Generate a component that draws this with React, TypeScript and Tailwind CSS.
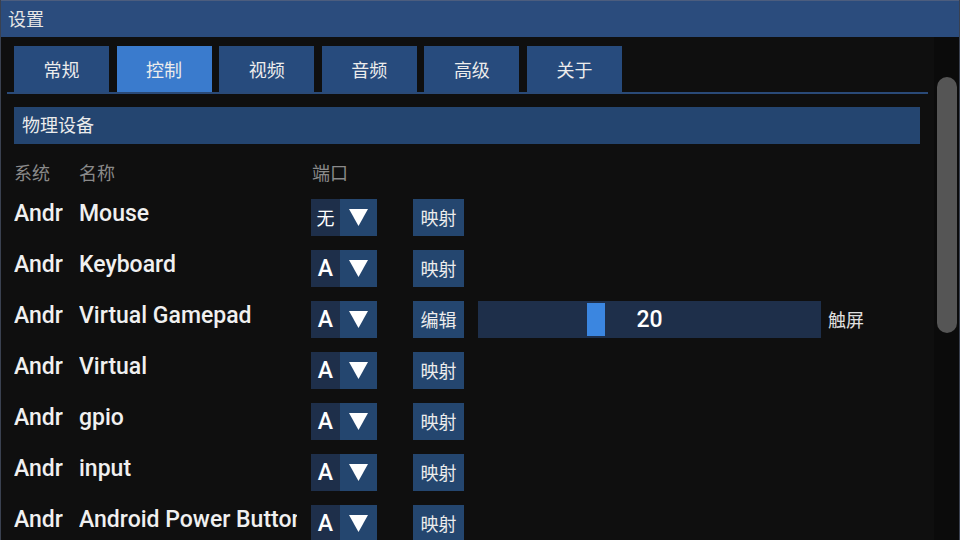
import { useState } from "react";

const tabs = ["常规", "控制", "视频", "音频", "高级", "关于"];

type Device = {
  system: string;
  name: string;
  port: string;
  action: string;
  touch?: number;
};

const devices: Device[] = [
  { system: "Android", name: "Mouse", port: "无", action: "映射" },
  { system: "Android", name: "Keyboard", port: "A", action: "映射" },
  { system: "Android", name: "Virtual Gamepad", port: "A", action: "编辑", touch: 20 },
  { system: "Android", name: "Virtual", port: "A", action: "映射" },
  { system: "Android", name: "gpio", port: "A", action: "映射" },
  { system: "Android", name: "input", port: "A", action: "映射" },
  { system: "Android", name: "Android Power Button", port: "A", action: "映射" },
];

const PortSelect = ({ value }: { value: string }) => (
  <div className="flex h-[37px] w-[66px] shrink-0">
    <div
      className={`flex w-[29px] items-center justify-center bg-[#1e2f4a] pt-[2px] text-white ${
        value === "A" ? "text-[23px] font-medium" : "text-[18px]"
      }`}
    >
      {value}
    </div>
    <div className="flex flex-1 items-center justify-center bg-[#24466f]">
      <svg width="19" height="17" viewBox="0 0 19 17">
        <polygon points="0,0 19,0 9.5,17" fill="#ffffff" />
      </svg>
    </div>
  </div>
);

const TouchSlider = ({ value }: { value: number }) => (
  <div className="relative flex h-[37px] w-[343px] shrink-0 items-center justify-center bg-[#1e2f4a] pt-[2px]">
    <div className="absolute left-[109px] top-[2px] bottom-[2px] w-[18px] bg-[#3b86e0]" />
    <span className="relative text-[23px] font-medium text-white">{value}</span>
  </div>
);

export default function App() {
  const [tab, setTab] = useState(1);

  return (
    <div
      className="flex h-[540px] w-[960px] flex-col overflow-hidden border-x border-[#3a4150] bg-[#0f0f0f] text-[#f0f0f0]"
      style={{ fontFamily: "Roboto, 'Noto Sans CJK SC', sans-serif" }}
    >
      {/* Title bar */}
      <div className="flex h-[37px] shrink-0 items-center border-t border-[#4c5d7e] bg-[#2b4c7d] pl-[7px] text-[18px] text-[#e6e6e6]">
        设置
      </div>

      <div className="flex min-h-0 flex-1">
        <div className="min-w-0 flex-1 overflow-hidden px-[6px] pt-[9px]">
          {/* Tabs */}
          <div className="flex gap-[7.6px] border-b-2 border-[#2a4a78] pl-[7px]">
            {tabs.map((t, i) => (
              <button
                key={t}
                onClick={() => setTab(i)}
                className={`flex h-[46px] w-[95px] items-center justify-center pt-[2px] text-[18px] text-[#ececec] ${
                  i === tab ? "bg-[#3a7bcd]" : "bg-[#274b7d]"
                }`}
              >
                {t}
              </button>
            ))}
          </div>

          {/* Physical devices */}
          <div className="ml-[7px] mr-[8px] mt-[13px] flex h-[37px] items-center bg-[#244570] pl-[8px] text-[18px] text-[#ececec]">
            物理设备
          </div>

          <div className="ml-[7px] mt-[14px] flex h-[30px] items-center text-[18px] text-[#8a8a8a]">
            <span className="w-[65px]">系统</span>
            <span className="w-[232px]">名称</span>
            <span className="pl-px">端口</span>
          </div>

          <div className="ml-[7px] mt-[11px] flex flex-col gap-[14px]">
            {devices.map((d, i) => (
              <div key={i} className="flex h-[37px] shrink-0 items-start">
                <div className="w-[49px] shrink-0 overflow-hidden whitespace-nowrap text-[23px] font-medium leading-[30px]">
                  {d.system}
                </div>
                <div className="ml-[16px] w-[218px] shrink-0 overflow-hidden whitespace-nowrap text-[23px] font-medium leading-[30px]">
                  {d.name}
                </div>
                <div className="ml-[14px]">
                  <PortSelect value={d.port} />
                </div>
                <button className="ml-[36px] flex h-[37px] w-[51px] shrink-0 items-center justify-center bg-[#24466f] pt-[2px] text-[18px] text-[#ececec]">
                  {d.action}
                </button>
                {d.touch !== undefined && (
                  <div className="ml-[14px] flex items-center gap-[7px]">
                    <TouchSlider value={d.touch} />
                    <span className="pt-[2px] text-[18px] text-[#e0e0e0]">触屏</span>
                  </div>
                )}
              </div>
            ))}
          </div>
        </div>

        {/* Scrollbar */}
        <div className="w-[25px] shrink-0 bg-[#0b0b0b] pl-[3px] pt-[40px]">
          <div className="h-[256px] w-[20px] rounded-full bg-[#555555]" />
        </div>
      </div>
    </div>
  );
}
